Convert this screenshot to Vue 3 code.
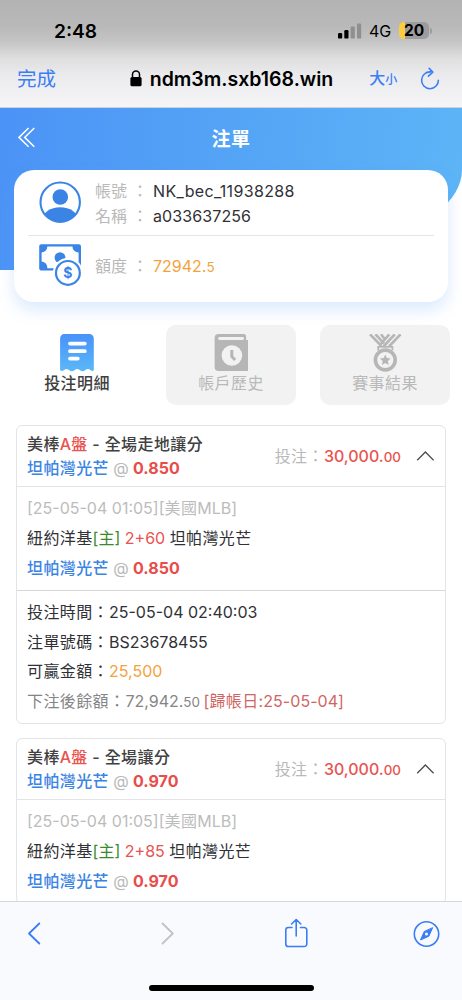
<script setup>
const bets = [
  {
    id: 1, kind: '全場走地讓分', team: '坦帕灣光芒', odds: '0.850', stake: '30,000.', cents: '00',
    time: '[25-05-04 01:05]', home: '紐約洋基', line: '2+60', away: '坦帕灣光芒',
    details: true,
  },
  {
    id: 2, kind: '全場讓分', team: '坦帕灣光芒', odds: '0.970', stake: '30,000.', cents: '00',
    time: '[25-05-04 01:05]', home: '紐約洋基', line: '2+85', away: '坦帕灣光芒',
    details: false,
  },
]
</script>

<template>
  <div class="phone" lang="zh-Hant">
    <div class="chrome">
      <div class="status">
        <span class="clock">2:48</span>
        <div class="status-right">
          <svg class="signal" width="24" height="16" viewBox="0 0 24 16">
            <rect x="0" y="10" width="4.2" height="5.6" rx="1.2" fill="#000" />
            <rect x="6.3" y="7" width="4.2" height="8.6" rx="1.2" fill="#000" />
            <rect x="12.6" y="3.5" width="4.2" height="12.1" rx="1.2" fill="#8f8f90" />
            <rect x="19" y="0.4" width="4.2" height="15.2" rx="1.2" fill="#8f8f90" />
          </svg>
          <span class="net">4G</span>
          <div class="battery"><span>20</span></div>
          <i class="nub"></i>
        </div>
      </div>
      <div class="address">
        <span class="done">完成</span>
        <svg class="lock" width="12" height="17" viewBox="0 0 12 17">
          <path d="M2.5 8V4.6a3.5 3.5 0 0 1 7 0V8" fill="none" stroke="#000" stroke-width="1.5" />
          <rect x="0.4" y="7" width="11.2" height="9.3" rx="1.6" />
        </svg>
        <span class="url">ndm3m.sxb168.win</span>
        <span class="size"><b>大</b><small>小</small></span>
        <svg class="reload" width="20" height="24" viewBox="0 0 20 24" fill="none" stroke="#3b7df5" stroke-width="1.6" stroke-linecap="round" stroke-linejoin="round">
          <path d="M10.600 4.900A8.400 8.400 0 1 0 18.400 13.300M9.200 1.400l3.600 3.700-4.400 4" />
        </svg>
      </div>
    </div>

    <div class="hero">
      <div class="blue"></div>
      <div class="titlebar">
        <svg class="back" width="18" height="21" viewBox="0 0 18 21" fill="none" stroke="#fff" stroke-width="1.5">
          <path d="M10.600 1L1 10.400l9.600 9.400M16.300 1L6.700 10.400l9.600 9.400" />
        </svg>
        <h1>注單</h1>
      </div>
      <div class="account">
        <div class="row who">
          <svg width="42" height="42" viewBox="0 0 42 42">
            <defs><clipPath id="face"><circle cx="21" cy="21" r="20" /></clipPath></defs>
            <circle cx="21.300" cy="16" r="7.800" fill="#3984e4" />
            <ellipse cx="21.200" cy="39" rx="18" ry="12.700" fill="#3984e4" clip-path="url(#face)" />
            <circle cx="21.200" cy="21.200" r="19.700" fill="none" stroke="#3984e4" stroke-width="2.100" />
          </svg>
          <div class="pairs">
            <p><label>帳號</label><i>：</i><span class="login">NK_bec_11938288</span></p>
            <p><label>名稱</label><i>：</i><span class="alias">a033637256</span></p>
          </div>
        </div>
        <div class="row money">
          <svg width="42" height="42" viewBox="0 0 42 42">
            <rect x="1.400" y="1.400" width="39.400" height="24" rx="1" fill="none" stroke="#3984e4" stroke-width="2.4" />
            <path d="M1 1h7.300v1.200A6 6 0 0 1 2 8.600H1zM40.800 1h-7.300v1.200A6 6 0 0 0 39.800 8.600h1zM1 25h7.300v-1.200A6 6 0 0 0 2 17.400H1z" fill="#3984e4" />
            <circle cx="21" cy="13.600" r="5.400" fill="#3984e4" />
            <circle cx="28.900" cy="28.900" r="15" fill="#fff" />
            <circle cx="28.900" cy="28.900" r="11.900" fill="#fff" stroke="#3984e4" stroke-width="2.200" />
            <text x="28.900" y="33.800" text-anchor="middle" class="dollar">$</text>
          </svg>
          <div class="pairs">
            <p><label>額度</label><i>：</i><span class="gold">72942.<small>5</small></span></p>
          </div>
        </div>
      </div>
    </div>

    <div class="tabs">
      <div class="tab on">
        <svg width="34" height="38" viewBox="0 0 34 38">
          <defs><linearGradient id="bill" x1="0" y1="0" x2="0" y2="1"><stop offset="0" stop-color="#4891fa" /><stop offset="1" stop-color="#5bb8f7" /></linearGradient></defs>
          <path d="M4.500 0h24a4.500 4.500 0 0 1 4.500 4.500V36.300q-1.400 1.200-3.200 0-2.700-2.600-5.400 0-2.600 1.800-5.200 0-2.800-2.600-5.500 0-2.600 1.800-5.300 0-2.700-2.600-5.400 0-1.500 1.200-3.700 0V4.500A4.500 4.500 0 0 1 4.500 0z" transform="translate(0.800)" fill="url(#bill)" />
          <path d="M10 9.600h14.800M10 17.200h14.800M10 24.600h7.800" stroke="#fff" stroke-width="3.800" stroke-linecap="round" />
        </svg>
        <span>投注明細</span>
      </div>
      <div class="tab">
        <svg width="34" height="38" viewBox="-0.600 0 34 38">
          <path d="M4 0h25a2.500 2.500 0 0 1 2.500 2.500V6H33.500V37H4a4 4 0 0 1-4-4V4a4 4 0 0 1 4-4z" fill="#b6b6b6" />
          <path d="M5 4.500h23" stroke="#f2f2f2" stroke-width="2.800" stroke-linecap="round" />
          <circle cx="17.300" cy="21.500" r="10.300" fill="#f2f2f2" />
          <path d="M17.200 16v6.500l3.300 3.500" fill="none" stroke="#b6b6b6" stroke-width="3" />
        </svg>
        <span>帳戶歷史</span>
      </div>
      <div class="tab">
        <svg width="34" height="38" viewBox="-0.500 0 34 38" fill="none" stroke="#b6b6b6">
          <path d="M1.500 0.300L13 12M7 0.300l8.500 9M12.500 0.300l3.300 4.200M32 0.300L20.500 12.500M26.300 0.300L15 12.500M20.800 0.300L11.500 11" stroke-width="2.600" />
          <path d="M9.700 16.500v-3.700h14.200v3.700" stroke-width="1.800" fill="#f2f2f2" />
          <circle cx="16.800" cy="26" r="9.900" stroke-width="3.600" fill="#f2f2f2" />
          <path d="M16.800 20.600l1.600 3.500 3.800.4-2.800 2.600.8 3.800-3.400-1.900-3.400 1.900.8-3.800-2.800-2.600 3.800-.4z" fill="#b6b6b6" stroke="none" />
        </svg>
        <span>賽事結果</span>
      </div>
    </div>

    <div class="bets">
      <section v-for="b in bets" :key="b.id" class="bet">
        <header>
          <div class="names">
            <p class="kind">美棒<em>A<span class="han">盤</span></em> - {{ b.kind }}</p>
            <p class="pick"><b>{{ b.team }}</b><i> @ </i><strong>{{ b.odds }}</strong></p>
          </div>
          <p class="stake">投注：<b>{{ b.stake }}<small>{{ b.cents }}</small></b></p>
          <svg width="18" height="10" viewBox="0 0 18 10" fill="none" stroke="#4d4d4d" stroke-width="1.300"><path d="M1.200 9.300L9.400 1l8.200 8.300" /></svg>
        </header>
        <div class="match">
          <p class="meta">{{ b.time }}[<span class="han">美國</span>MLB]</p>
          <p>{{ b.home }}<u>[主]</u><em>&nbsp;{{ b.line }}&nbsp;</em>{{ b.away }}</p>
          <p class="pick"><b>{{ b.team }}</b><i> @ </i><strong>{{ b.odds }}</strong></p>
        </div>
        <div v-if="b.details" class="details">
          <p>投注時間：<span>25-05-04 02:40:03</span></p>
          <p>注單號碼：<span>BS23678455</span></p>
          <p>可贏金額：<span class="gold">25,500</span></p>
          <p class="rest">下注後餘額：<span>72,942.<small>50</small></span><q>[<span class="han">歸帳日</span>:25-05-04]</q></p>
        </div>
      </section>
    </div>

    <div class="toolbar">
      <svg width="462" height="98" viewBox="0 0 462 98" fill="none" stroke="#3b7df5" stroke-width="1.800" stroke-linecap="round" stroke-linejoin="round">
        <path d="M39.300 21.500L29 31.500l10.300 10" />
        <path d="M162.500 21.500l10.300 10-10.300 10" stroke="#c1c2c5" />
        <path d="M292 25.500h-3.600a2.600 2.600 0 0 0-2.600 2.600V41.900a2.600 2.600 0 0 0 2.600 2.600h15.800a2.600 2.600 0 0 0 2.600-2.600V28.100a2.600 2.600 0 0 0-2.600-2.600H300.500M296.200 34V18M291.600 22l4.600-4.500 4.600 4.500" stroke-width="1.600" />
        <circle cx="426.500" cy="32" r="12.200" stroke-width="1.600" />
        <path d="M432.500 26l-3.600 8.200-8.400 3.800 3.600-8.200z" fill="#3b7df5" stroke-width="1" />
        <circle cx="426.500" cy="32" r="1.500" fill="#f9fafe" stroke="none" />
      </svg>
      <div class="home"></div>
    </div>
  </div>
</template>

<style>
body { margin: 0; background: #fff; }
</style>

<style scoped>
* { box-sizing: border-box; }
p, h1 { margin: 0; font-weight: 400; }
i, em { font-style: normal; }
u { text-decoration: none; }
q { quotes: none; }
q::before, q::after { content: none; }
svg { display: block; flex: none; }
.phone {
  position: relative; width: 462px; height: 1000px; overflow: hidden; background: #fff;
  font-family: Inter, "Noto Sans CJK TC", sans-serif; font-size: 16px; color: #303136;
  display: flex; flex-direction: column;
}
.chrome {
  height: 108px; flex: none; border-bottom: 1px solid #cdd2da;
  background: linear-gradient(#b3b3b3 0, #b9b9b9 27px, #c4c4c4 41px, #dfdfe0 59px, #ebebed 75px, #f5f5f8 107px);
}
.status { height: 61px; display: flex; justify-content: space-between; color: #000; padding: 0 30px 0 54px; }
.clock { font-size: 19.200px; font-weight: 600; line-height: 62px; }
.status-right { display: flex; height: 61px; align-items: center; }
.signal { margin-right: 7px; }
.net { font-size: 16px; font-weight: 400; width: 30px; padding-top: 1px; }
.battery {
  width: 30px; height: 17px; border-radius: 5px; font-weight: 700; font-size: 15.500px; line-height: 18px; text-align: center;
  background: linear-gradient(90deg, #fcce3e 6px, #9d9d9e 6px);
}
.nub { width: 2px; height: 6px; margin-left: 1px; border-radius: 0 2px 2px 0; background: #9d9d9e; }
.address { height: 46px; display: flex; align-items: center; padding: 0 22px 11px 17px; line-height: 30px; color: #000; }
.done { width: 113px; color: #3b7df5; font-size: 19.500px; }
.lock { margin-right: 8px; }
.url { width: 220px; font-size: 19.500px; font-weight: 600; white-space: nowrap; }
.size { color: #3b7df5; width: 51px; white-space: nowrap; display: flex; align-items: baseline; }
.size b { font-size: 16px; font-weight: 500; }
.size small { font-size: 12px; font-weight: 500; }
.hero { position: relative; height: 194px; flex: none; }
.blue {
  position: absolute; inset: 0 0 auto; height: 162px;
  background: linear-gradient(97deg, #4b93f6, #55a5f6 52%, #5db5f6);
  clip-path: path("M0 0H462V62C462 78 452 92 440 102L300 162H0Z");
}
.titlebar { position: relative; height: 62px; display: flex; align-items: center; justify-content: center; color: #fff; }
.back { position: absolute; left: 18px; top: 19px; }
h1 { font-size: 19px; font-weight: 700; line-height: 60px; letter-spacing: 0.400px; padding-top: 1px; }
.account {
  position: relative; margin: 0 14px; height: 132px; background: #fff; border-radius: 20px;
  box-shadow: 0 8px 16px rgba(90, 160, 250, 0.220); padding: 0 14px;
}
.row { display: flex; padding-left: 11px; gap: 14px; }
.who { height: 66px; border-bottom: 1px solid #e6e6e8; padding-top: 9px; }
.who > svg { margin-top: 2px; }
.who .pairs { line-height: 25px; }
.login { letter-spacing: 0.330px; }
.alias { letter-spacing: 0.100px; }
.money { padding-top: 8px; }
.money .pairs { line-height: 45px; }
.pairs p { display: flex; }
.pairs label { color: #b9b9b9; width: 37px; }
.pairs i { width: 21px; color: #b9b9b9; }
.gold { color: #f3a33c; }
.gold small, .stake small, .rest small { font-size: 0.840em; }
.dollar { font: 700 14px Inter, sans-serif; fill: #3984e4; }
.tabs { height: 80px; margin: 23px 12px 20px; display: flex; gap: 24px; flex: none; }
.tab { width: 130px; border-radius: 10px; background: #f2f2f2; color: #b9b9b9; display: flex; flex-direction: column; align-items: center; padding-top: 9px; letter-spacing: 0.400px; line-height: 22px; }
.tab.on { background: #fff; color: #404040; font-weight: 500; }
.bets { padding: 0 16px; display: flex; flex-direction: column; gap: 14px; flex: none; }
.bet { border: 1px solid #e2e4ea; border-radius: 6px; white-space: nowrap; letter-spacing: 0.400px; }
.bet header { display: flex; align-items: center; height: 61px; padding: 0 11px 0 10px; border-bottom: 1px solid #e2e4ea; }
.names { flex: 1; line-height: 24px; padding-bottom: 1px; }
.kind { font-weight: 500; color: #404040; }
em { color: #e95350; letter-spacing: 0; }
.han { letter-spacing: 0.400px; }
.pick b { color: #3984e4; font-weight: 500; }
.pick i { color: #b9b9b9; letter-spacing: -0.150px; }
.pick strong { color: #e94c49; font-weight: 700; letter-spacing: 0; }
.stake { color: #b9b9b9; margin-right: 15px; padding-bottom: 2px; }
.stake b { color: #e95350; font-weight: 500; letter-spacing: 0; }
.match { height: 103px; padding: 6px 10px; line-height: 30px; }
.meta { color: #bcbcbc; letter-spacing: 0; }
u { color: #3a8a2c; letter-spacing: 0; }
.details { border-top: 1px solid #d6d7da; height: 133px; padding: 7px 10px; line-height: 29.700px; }
.details p > span { letter-spacing: 0; }
.rest { color: #858585; }
.rest q { color: #cf6664; letter-spacing: 0.050px; margin-left: 3.500px; }
.toolbar { position: absolute; left: 0; right: 0; bottom: 0; height: 99px; background: #f9fafe; border-top: 1px solid #d3d6dc; }
.home { position: absolute; left: 149px; bottom: 9.500px; width: 165px; height: 6px; border-radius: 3px; background: #000; }
</style>
